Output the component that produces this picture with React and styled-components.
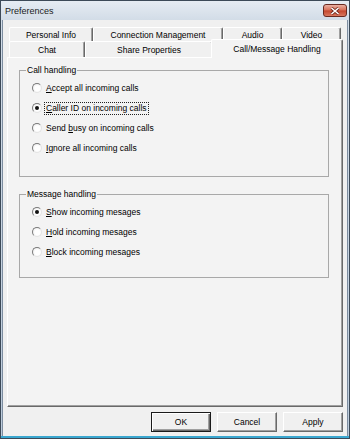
import styled, { createGlobalStyle } from 'styled-components';

const GlobalStyle = createGlobalStyle`
    html, body {
        margin: 0;
        padding: 0;
        background: #ffffff;
    }
    body {
        font-family: "Liberation Sans", Arial, sans-serif;
    }
`;

const topTabs = [
    { label: 'Personal Info', w: 84 },
    { label: 'Connection Management', w: 130 },
    { label: 'Audio', w: 59 },
    { label: 'Video', w: 59 },
];

const bottomTabs = [
    { label: 'Chat', w: 76 },
    { label: 'Share Properties', w: 128 },
    { label: 'Call/Message Handling', w: 132, selected: true },
];

const callOptions = [
    { key: 'A', rest: 'ccept all incoming calls' },
    { key: 'C', rest: 'aller ID on incoming calls', checked: true, focused: true },
    { pre: 'Send ', key: 'b', rest: 'usy on incoming calls' },
    { key: 'I', rest: 'gnore all incoming calls' },
];

const messageOptions = [
    { key: 'S', rest: 'how incoming mesages', checked: true },
    { key: 'H', rest: 'old incoming mesages' },
    { key: 'B', rest: 'lock incoming mesages' },
];

const RadioRow = ({ opt }) => (
    <Row>
        <RadioDot $checked={opt.checked} />
        <RadioLabel $focused={opt.focused}>
            {opt.pre}
            <u>{opt.key}</u>
            {opt.rest}
        </RadioLabel>
    </Row>
);

const App = () => {
    return (
        <>
            <GlobalStyle />
            <Window>
                <TitleBar>
                    <Title>Preferences</Title>
                    <CloseButton>
                        <svg width="10" height="8" viewBox="0 0 10 8">
                            <path d="M1.5 1 L8.5 7 M8.5 1 L1.5 7" stroke="#6b2418" strokeWidth="3" />
                            <path d="M1.5 1 L8.5 7 M8.5 1 L1.5 7" stroke="#ffffff" strokeWidth="1.6" />
                        </svg>
                    </CloseButton>
                </TitleBar>
                <Client>
                    <TabStrip>
                        <TabRow $h={14}>
                            {topTabs.map((t) => (
                                <Tab key={t.label} $w={t.w}>{t.label}</Tab>
                            ))}
                        </TabRow>
                        <TabRow $h={16}>
                            {bottomTabs.map((t) => (
                                <Tab key={t.label} $w={t.w} $selected={t.selected}>{t.label}</Tab>
                            ))}
                        </TabRow>
                    </TabStrip>
                    <Panel>
                        <GroupBox>
                            <Legend>Call handling</Legend>
                            <OptionList $bottom={18}>
                                {callOptions.map((o) => (
                                    <RadioRow key={o.rest} opt={o} />
                                ))}
                            </OptionList>
                        </GroupBox>
                        <GroupBox $gap={11}>
                            <Legend>Message handling</Legend>
                            <OptionList $bottom={15}>
                                {messageOptions.map((o) => (
                                    <RadioRow key={o.rest} opt={o} />
                                ))}
                            </OptionList>
                        </GroupBox>
                    </Panel>
                    <ButtonRow>
                        <Button $default>OK</Button>
                        <Button>Cancel</Button>
                        <Button>Apply</Button>
                    </ButtonRow>
                </Client>
            </Window>
        </>
    );
};

export default App;

const Window = styled.div`
    box-sizing: border-box;
    width: 350px;
    height: 439px;
    border: 1px solid #3d4a58;
    padding: 0 2px 2px;
    background: linear-gradient(to bottom, #d3dde8, #bccbdb);
    box-shadow: inset 0 -2px #3aa7d0;
    display: flex;
    flex-direction: column;
`;

const TitleBar = styled.div`
    height: 19px;
    display: flex;
    align-items: center;
    justify-content: space-between;
    padding: 0 0 0 4px;
    background: linear-gradient(to bottom, #e6ecf3, #d2dce7);
    margin: 0 -2px;
    padding-right: 2px;
`;

const Title = styled.span`
    font-size: 9px;
    color: #1b1b1b;
`;

const CloseButton = styled.div`
    box-sizing: border-box;
    width: 24px;
    height: 13px;
    border: 1px solid #6a2a20;
    border-radius: 3px;
    background: linear-gradient(to bottom, #eab0a2, #d76d55 48%, #c4472e 52%, #d9775e);
    display: flex;
    align-items: center;
    justify-content: center;
`;

const Client = styled.div`
    flex: 1;
    background: #f0f0f0;
    display: flex;
    flex-direction: column;
    padding: 7px 4px 4px;
    border-left: 1px solid #7d8da0;
    border-right: 1px solid #7d8da0;
    margin: 0 -1px;
`;

const TabStrip = styled.div`
    display: flex;
    flex-direction: column;
    padding-left: 2px;
`;

const TabRow = styled.div`
    display: flex;
    align-items: flex-start;
    height: ${(p) => p.$h}px;
`;

const Tab = styled.div`
    box-sizing: border-box;
    width: ${(p) => p.$w}px;
    height: ${(p) => (p.$selected ? '19px' : '100%')};
    margin-top: ${(p) => (p.$selected ? '-2px' : '0')};
    margin-left: ${(p) => (p.$selected ? '-2px' : '0')};
    position: ${(p) => (p.$selected ? 'relative' : 'static')};
    z-index: ${(p) => (p.$selected ? 1 : 'auto')};
    background: ${(p) => (p.$selected ? '#f3f3f3' : '#f0f0f0')};
    padding-bottom: ${(p) => (p.$selected ? '1px' : '0')};
    display: flex;
    align-items: center;
    justify-content: center;
    font-size: 8.5px;
    color: #000;
    white-space: nowrap;
    border-top: 1px solid #ffffff;
    border-left: 1px solid #ffffff;
    border-right: 1px solid #696969;
    border-radius: 2px 2px 0 0;
    box-shadow: inset -1px 0 #a0a0a0;
`;

const Panel = styled.div`
    box-sizing: border-box;
    flex: 1;
    border: 1px solid;
    border-color: #ffffff #696969 #696969 #ffffff;
    box-shadow: inset -1px -1px #a0a0a0;
    background: #f3f3f3;
    padding: 6px 13px 0 11px;
`;

const GroupBox = styled.fieldset`
    margin: ${(p) => p.$gap || 0}px 0 0;
    padding: 0;
    border: 1px solid #a8a8a8;
    min-width: 0;
`;

const Legend = styled.legend`
    margin-left: 6px;
    padding: 0 1px;
    font-size: 8.5px;
    line-height: 12px;
    color: #000;
`;

const OptionList = styled.div`
    display: flex;
    flex-direction: column;
    padding: 2px 0 ${(p) => p.$bottom}px 12px;
`;

const Row = styled.div`
    height: 20px;
    display: flex;
    align-items: center;
    gap: 3px;
`;

const RadioDot = styled.span`
    box-sizing: border-box;
    flex: none;
    width: 10px;
    height: 10px;
    border-radius: 50%;
    border: 1px solid;
    border-color: #7a7a7a #e4e4e4 #e4e4e4 #7a7a7a;
    background: radial-gradient(circle at 55% 55%, #ffffff 40%, #e2e2e2);
    display: flex;
    align-items: center;
    justify-content: center;

    &::after {
        content: '';
        width: 4px;
        height: 4px;
        border-radius: 50%;
        background: ${(p) => (p.$checked ? '#111' : 'transparent')};
    }
`;

const RadioLabel = styled.span`
    font-size: 8.5px;
    line-height: 11px;
    padding: 0 1px;
    color: #000;
    white-space: nowrap;
    outline: ${(p) => (p.$focused ? '1px dotted #222' : 'none')};
`;

const ButtonRow = styled.div`
    display: flex;
    justify-content: flex-end;
    gap: 6px;
    margin-top: 5px;
`;

const Button = styled.button`
    box-sizing: border-box;
    width: 60px;
    height: 20px;
    padding: 0;
    font-family: inherit;
    font-size: 8.5px;
    color: #000;
    background: #f0f0f0;
    border: 1px solid;
    border-color: ${(p) => (p.$default ? '#1a1a1a' : '#ffffff #696969 #696969 #ffffff')};
    box-shadow: ${(p) =>
        p.$default
            ? 'inset 1px 1px #ffffff, inset -1px -1px #696969, inset -2px -2px #a0a0a0'
            : 'inset -1px -1px #a0a0a0'};
`;
